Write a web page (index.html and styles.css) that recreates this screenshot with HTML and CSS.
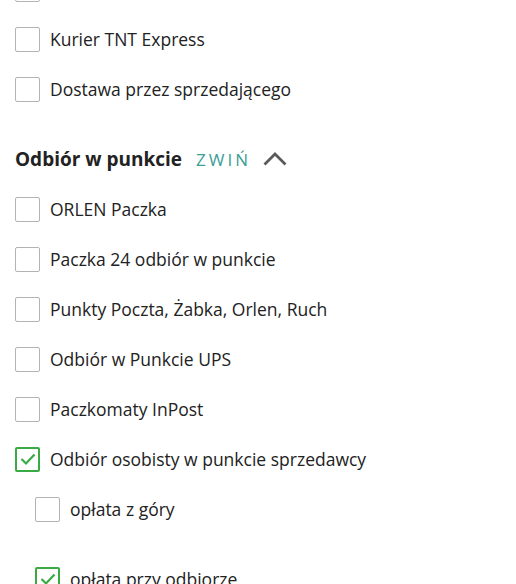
FILE: index.html
```html
<!DOCTYPE html>
<html lang="pl">
<head>
<meta charset="utf-8">
<link rel="stylesheet" href="styles.css">
</head>
<body>
<div class="filters">
  <label class="item"><span class="box"></span><span class="label">Kurier DPD</span></label>
  <label class="item"><span class="box"></span><span class="label">Kurier TNT Express</span></label>
  <label class="item"><span class="box"></span><span class="label">Dostawa przez sprzedającego</span></label>

  <div class="group-head">
    <span class="group-title">Odbiór w punkcie</span>
    <span class="toggle">ZWIŃ</span>
    <svg class="chevron" width="24" height="14" viewBox="0 0 24 14"><path d="M1.5 12.5 L12 2 L22.5 12.5" fill="none" stroke="#5a5a5a" stroke-width="2.8"/></svg>
  </div>

  <label class="item"><span class="box"></span><span class="label">ORLEN Paczka</span></label>
  <label class="item"><span class="box"></span><span class="label">Paczka 24 odbiór w punkcie</span></label>
  <label class="item"><span class="box"></span><span class="label">Punkty Poczta, Żabka, Orlen, Ruch</span></label>
  <label class="item"><span class="box"></span><span class="label">Odbiór w Punkcie UPS</span></label>
  <label class="item"><span class="box"></span><span class="label">Paczkomaty InPost</span></label>
  <label class="item"><span class="box checked"><svg width="20" height="20" viewBox="0 0 20 20"><path d="M3.5 10 L8 14.5 L16.5 5.5" fill="none" stroke="#3aaa45" stroke-width="2.2"/></svg></span><span class="label">Odbiór osobisty w punkcie sprzedawcy</span></label>
  <div class="sub">
    <label class="item"><span class="box"></span><span class="label">opłata z góry</span></label>
    <label class="item gap"><span class="box checked"><svg width="20" height="20" viewBox="0 0 20 20"><path d="M3.5 10 L8 14.5 L16.5 5.5" fill="none" stroke="#3aaa45" stroke-width="2.2"/></svg></span><span class="label">opłata przy odbiorze</span></label>
  </div>
</div>
</body>
</html>
```

FILE: styles.css
```css
html, body {
  margin: 0;
  padding: 0;
  background: #fff;
  overflow: hidden;
}
body {
  font-family: "Open Sans", "Liberation Sans", sans-serif;
  color: #222;
}
.filters {
  margin-top: -36px;
  padding-left: 15px;
}
.item {
  display: flex;
  align-items: center;
  height: 50px;
}
.box {
  box-sizing: border-box;
  width: 25px;
  height: 25px;
  border: 1px solid #b3b3b3;
  border-radius: 2px;
  flex: none;
  display: flex;
  align-items: center;
  justify-content: center;
}
.box.checked {
  border: 2px solid #3aaa45;
}
.label {
  margin-left: 10px;
  font-size: 17.5px;
  line-height: 24px;
  color: #222;
}
.group-head {
  display: flex;
  align-items: center;
  height: 50px;
  margin-top: 20px;
}
.group-title {
  font-size: 19px;
  font-weight: 700;
  color: #222;
}
.toggle {
  margin-left: 14px;
  font-size: 17px;
  letter-spacing: 3px;
  color: #3a9e95;
}
.chevron {
  margin-left: 12px;
}
.sub {
  padding-left: 20px;
}
.item.gap {
  margin-top: 20px;
}
```
